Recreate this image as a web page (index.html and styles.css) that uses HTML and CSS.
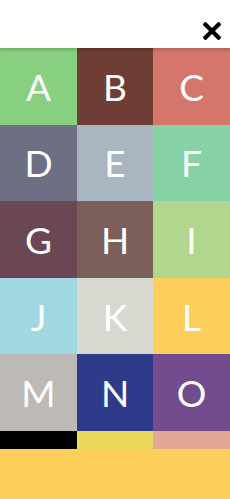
FILE: index.html
```html
<!DOCTYPE html>
<html>

<head>
  <title>Letters</title>
  <link rel="stylesheet" href="styles.css">
</head>

<body>
  <div class="header">
    <svg class="close" width="18" height="18" viewBox="0 0 18 18">
      <path d="M2.5 2.5 L15.5 15.5 M15.5 2.5 L2.5 15.5" stroke="#000" stroke-width="4.2" stroke-linecap="square" fill="none" />
    </svg>
  </div>
  <div class="grid">
    <div class="tile a">A</div>
    <div class="tile b">B</div>
    <div class="tile c">C</div>
    <div class="tile d">D</div>
    <div class="tile e">E</div>
    <div class="tile f">F</div>
    <div class="tile g">G</div>
    <div class="tile h">H</div>
    <div class="tile i">I</div>
    <div class="tile j">J</div>
    <div class="tile k">K</div>
    <div class="tile l">L</div>
    <div class="tile m">M</div>
    <div class="tile n">N</div>
    <div class="tile o">O</div>
  </div>
  <div class="strip">
    <div class="black"></div>
    <div class="yellow"></div>
    <div class="pink"></div>
  </div>
  <div class="panel"></div>
</body>

</html>
```

FILE: styles.css
```css
body {
  margin: 0;
  width: 230px;
  font-family: Lato, "Open Sans", sans-serif;
  background: #fdce5a;
}
.header {
  height: 48px;
  background: #fff;
  display: flex;
  justify-content: flex-end;
  align-items: center;
  padding-right: 9px;
  position: relative;
  z-index: 1;
  box-shadow: 0 2px 3px rgba(0, 0, 0, 0.18);
}
.close {
  margin-top: 14px;
}
.grid {
  display: grid;
  grid-template-columns: 77px 76px 77px;
  grid-template-rows: repeat(5, 1fr);
  height: 383px;
}
.tile {
  display: flex;
  align-items: center;
  justify-content: center;
  color: #fff;
  font-size: 37px;
  font-weight: 400;
}
.a { background: #86d07f; }
.b { background: #6e3d34; }
.c { background: #d4766a; }
.d { background: #6d7083; }
.e { background: #a9b6bf; }
.f { background: #86d2a4; }
.g { background: #6b4653; }
.h { background: #7a6058; }
.i { background: #b1d78f; }
.j { background: #9fd8e0; }
.k { background: #d8d8d0; }
.l { background: #fdce5a; }
.m { background: #bdb9b4; }
.n { background: #2e3a8a; }
.o { background: #724c8e; }
.strip {
  display: grid;
  grid-template-columns: 77px 76px 77px;
  height: 18px;
}
.black { background: #000; }
.yellow { background: #e9d85a; }
.pink { background: #e2a897; }
.panel {
  height: 50px;
  background: #fdce5a;
  box-shadow: 0 -3px 4px rgba(0, 0, 0, 0.15);
}
```
